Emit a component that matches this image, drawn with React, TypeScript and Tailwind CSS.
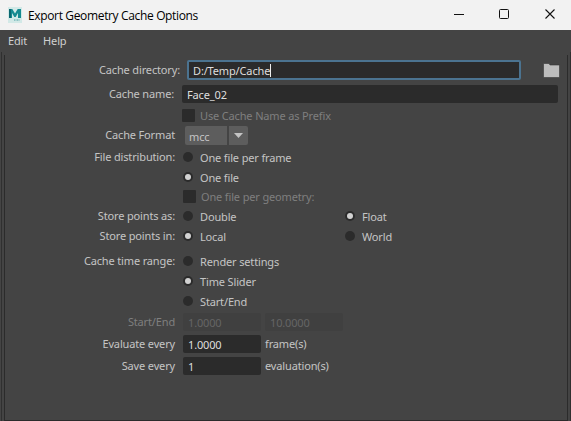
import type { ReactNode } from "react";

function Radio({ on, children, className = "" }: { on?: boolean; children: ReactNode; className?: string }) {
  return (
    <div className={`flex items-center ${className}`}>
      <span className="flex size-[10px] shrink-0 items-center justify-center rounded-full bg-[#2b2b2b]">
        {on && <span className="size-[6px] rounded-full bg-[#d2d2d2]" />}
      </span>
      <span className="ml-[7px]">{children}</span>
    </div>
  );
}

function Check({ children, className = "" }: { children: ReactNode; className?: string }) {
  return (
    <div className={`flex items-center text-[#7f7f7f] ${className}`}>
      <span className="size-[13px] shrink-0 rounded-[1px] bg-[#2b2b2b]" />
      <span className="ml-[5px]">{children}</span>
    </div>
  );
}

function Row({ label = "", h, lw = "w-[170px]", dim, children }: { label?: string; h: string; lw?: string; dim?: boolean; children: ReactNode }) {
  return (
    <div className={`flex shrink-0 items-center ${h}`}>
      <div className={`shrink-0 pb-[2px] text-right ${lw} ${dim ? "text-[#7f7f7f]" : ""}`}>{label}</div>
      {children}
    </div>
  );
}

function Field({ value, dim, className = "" }: { value: string; dim?: boolean; className?: string }) {
  return (
    <div className={`flex h-[18px] items-center rounded-[2px] pl-[5px] pt-px ${dim ? "bg-[#404040] text-[#656565]" : "bg-[#2b2b2b] text-[#dedede]"} ${className}`}>
      {value}
    </div>
  );
}

export default function App() {
  return (
    <div className="flex h-[421px] w-[571px] flex-col overflow-hidden bg-[#444] font-['Noto_Sans',sans-serif] text-[11px] leading-[15px] tracking-[-0.15px] whitespace-pre text-[#c4c4c4]">
      <header className="flex h-[30px] shrink-0 items-center bg-[#f2f2f2] text-black">
        <svg className="ml-[8px]" width="14" height="16" viewBox="0 0 14 16">
          <path d="M0 0h14v16H0z" fill="#d2e9e7" />
          <path d="M1 11V2h3.3L7 6.5 9.7 2H13v9h-3V6L7.7 10H6.3L4 6v5z" fill="#168b91" />
          <path d="M1 11V2h2v9z" fill="#0b6770" />
          <path d="M6 13h6" stroke="#4aa0a2" strokeDasharray="1 .5" />
        </svg>
        <h1 className="ml-[6px] font-['Open_Sans',sans-serif] text-[12px] tracking-[-0.35px]">Export Geometry Cache Options</h1>
        <svg className="ml-auto" width="117" height="30" viewBox="0 0 117 30" fill="none" stroke="#111">
          <path d="M0 14.500h10" />
          <rect x="45.5" y="9.500" width="9" height="9" rx="1" />
          <path d="m91.5 9.500 9 9m0-9-9 9" strokeWidth="1.1" />
        </svg>
      </header>
      <nav className="flex h-[22px] shrink-0 items-center gap-[16px] pb-[2px] pl-[8px] text-[#d0d0d0]">
        <span>Edit</span>
        <span>Help</span>
      </nav>
      <div className="ml-px flex grow border-x border-[#303030] px-[2px] pt-[3px]">
        <main className="flex grow flex-col border-x border-b border-[#2b2b2b] pt-[3px]">
          <Row label="Cache directory:" h="h-[24px]" lw="w-[175px]">
            <div className="ml-[7px] flex h-[20px] w-[334px] items-center rounded-[2px] border-2 border-[#4b7390] bg-[#2b2b2b] pl-[4px] pt-px text-[#dedede]">
              D:/Temp/Cache
              <span className="h-[13px] w-px bg-[#eee]" />
            </div>
            <svg className="ml-[22px]" width="17" height="15" viewBox="0 0 17 15">
              <path d="M.5 14.500V.5h5.500l1 1.500h9.500v12.500z" fill="#bdbdbd" stroke="#383838" strokeWidth=".6" />
            </svg>
          </Row>
          <Row label="Cache name:" h="h-[24px]" lw="w-[169px]">
            <Field value="Face_02" className="ml-[8px] w-[376px]" />
          </Row>
          <Row h="h-[18px]"><Check className="ml-[7px]">Use Cache Name as Prefix</Check></Row>
          <Row label="Cache Format" h="h-[23px]">
            <div className="ml-[10px] flex h-[19px] gap-[2px]">
              <span className="w-[42px] rounded-l-[2px] bg-[#5d5d5d] pt-[3px] pl-[4px]">mcc</span>
              <span className="flex w-[19px] items-center justify-center rounded-r-[2px] bg-[#5d5d5d]">
                <svg width="9" height="5" viewBox="0 0 9 5"><path d="M0 0h9L4.500 5z" fill="#c4c4c4" /></svg>
              </span>
            </div>
          </Row>
          <Row label="File distribution:" h="h-[20px]"><Radio className="ml-[8px]">One file per frame</Radio></Row>
          <Row h="h-[20px]"><Radio on className="ml-[8px]">One file</Radio></Row>
          <Row h="h-[19px]"><Check className="ml-[8px]">One file per geometry:</Check></Row>
          <Row label="Store points as:" h="h-[20px]">
            <Radio className="ml-[8px] w-[162px]">Double</Radio>
            <Radio on>Float</Radio>
          </Row>
          <Row label="Store points in:" h="h-[20px]">
            <Radio on className="ml-[8px] w-[162px]">Local</Radio>
            <Radio>World</Radio>
          </Row>
          <div className="h-[5px]" />
          <Row label="Cache time range:" h="h-[20px]"><Radio className="ml-[8px]">Render settings</Radio></Row>
          <Row h="h-[20px]"><Radio on className="ml-[8px]">Time Slider</Radio></Row>
          <Row h="h-[20px]"><Radio className="ml-[8px]">Start/End</Radio></Row>
          <Row label="Start/End" h="h-[22px]" dim>
            <Field value="1.0000" dim className="ml-[8px] w-[78px]" />
            <Field value="10.0000" dim className="ml-[4px] w-[78px]" />
          </Row>
          <Row label="Evaluate every" h="h-[22px]">
            <Field value="1.0000" className="ml-[8px] w-[78px]" />
            <span className="ml-[4px] pb-[2px]">frame(s)</span>
          </Row>
          <Row label="Save every" h="h-[22px]">
            <Field value="1" className="ml-[8px] w-[78px]" />
            <span className="ml-[4px] pb-[2px]">evaluation(s)</span>
          </Row>
        </main>
      </div>
    </div>
  );
}
